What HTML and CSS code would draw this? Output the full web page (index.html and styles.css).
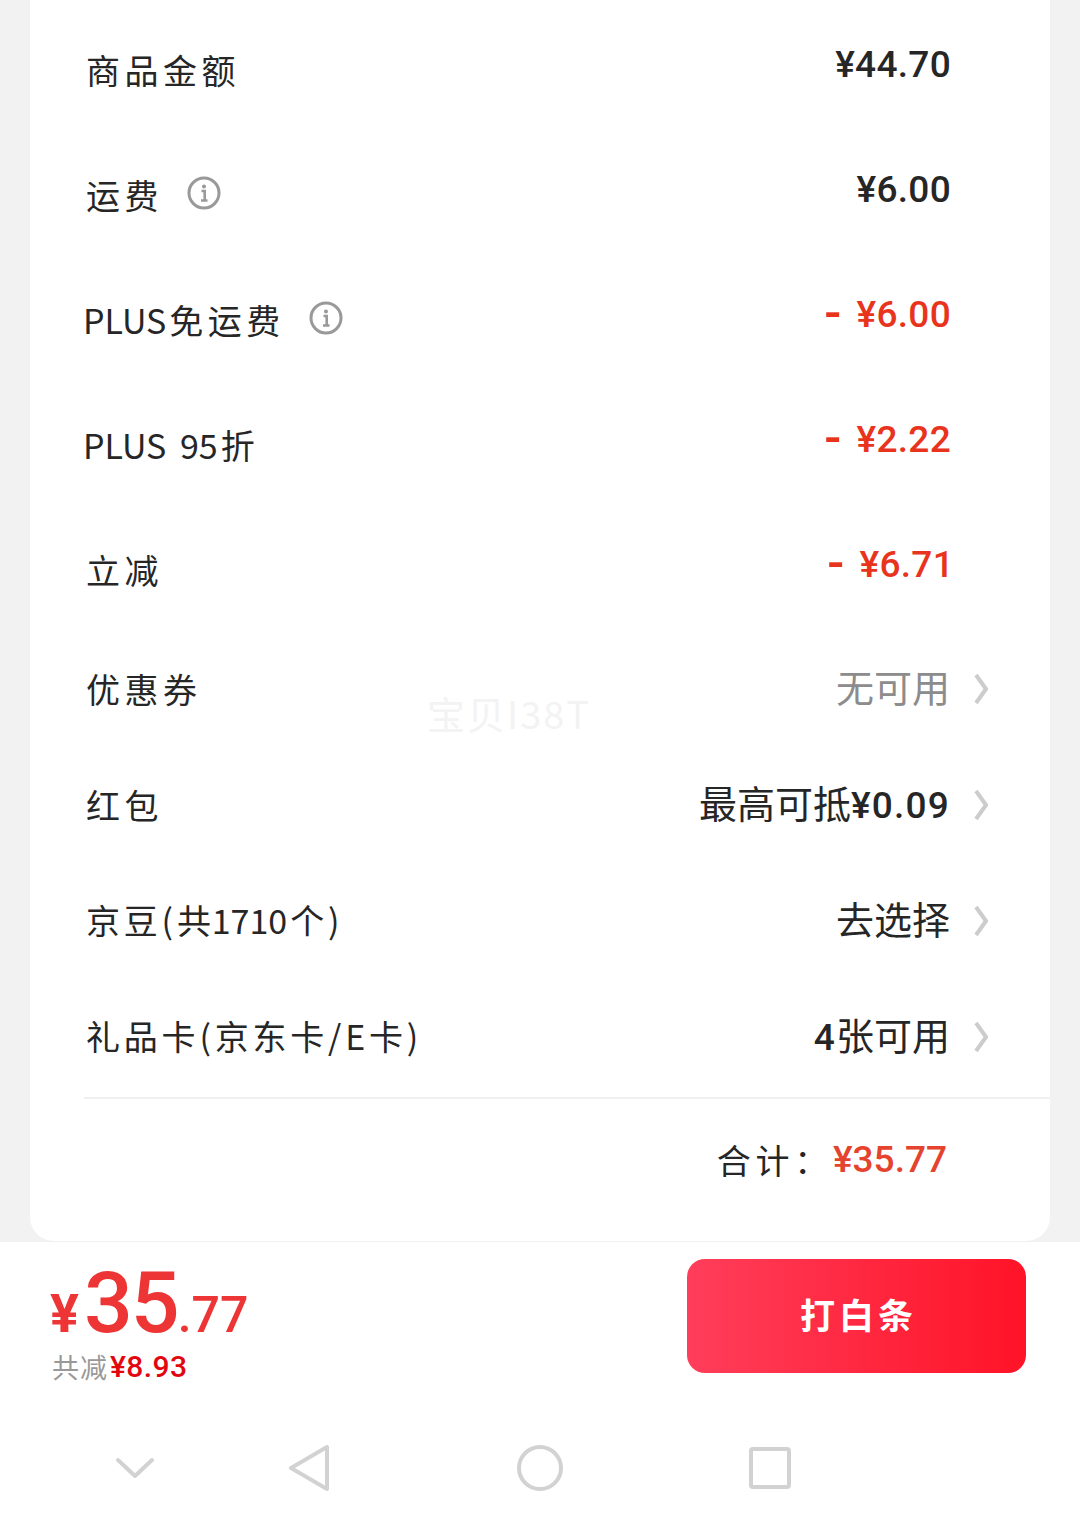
FILE: index.html
```html
<!DOCTYPE html>
<html>
<head>
<meta charset="utf-8">
<title>订单金额</title>
<link rel="stylesheet" href="styles.css">
</head>
<body>
<div class="page">
<section class="card">
    <div class="row row_big">
        <span class="label">商品金额</span>
        <span class="amount">¥44.70</span>
    </div>
    <div class="row row_big">
        <span class="label">运费<svg class="info" viewBox="0 0 34 34"><circle cx="17" cy="17" r="15" fill="none" stroke="#999" stroke-width="3"/><circle cx="17" cy="10.5" r="2" fill="#999"/><path d="M14.5 15h3.2v9M14 24.5h6.5" fill="none" stroke="#999" stroke-width="2.6"/></svg></span>
        <span class="amount">¥6.00</span>
    </div>
    <div class="row row_big">
        <span class="label"><span class="latin">PLUS</span>免运费<svg class="info" viewBox="0 0 34 34"><circle cx="17" cy="17" r="15" fill="none" stroke="#999" stroke-width="3"/><circle cx="17" cy="10.5" r="2" fill="#999"/><path d="M14.5 15h3.2v9M14 24.5h6.5" fill="none" stroke="#999" stroke-width="2.6"/></svg></span>
        <span class="amount red"><i class="minus">-</i>¥6.00</span>
    </div>
    <div class="row row_big">
        <span class="label"><span class="latin">PLUS 95</span>折</span>
        <span class="amount red"><i class="minus">-</i>¥2.22</span>
    </div>
    <div class="row row_big">
        <span class="label">立减</span>
        <span class="amount red amount_one"><i class="minus">-</i>¥6.71</span>
    </div>
    <div class="row row_link">
        <span class="label">优惠券</span>
        <span class="link grey">无可用</span>
        <svg class="arrow" viewBox="0 0 14 32"><path d="M2 2l10 14L2 30" fill="none" stroke="#ccc" stroke-width="4"/></svg>
    </div>
    <div class="row row_link">
        <span class="label">红包</span>
        <span class="link">最高可抵<span class="link_num">¥0.09</span></span>
        <svg class="arrow" viewBox="0 0 14 32"><path d="M2 2l10 14L2 30" fill="none" stroke="#ccc" stroke-width="4"/></svg>
    </div>
    <div class="row row_link">
        <span class="label label_long">京豆(共<span class="latin">1710</span>个)</span>
        <span class="link">去选择</span>
        <svg class="arrow" viewBox="0 0 14 32"><path d="M2 2l10 14L2 30" fill="none" stroke="#ccc" stroke-width="4"/></svg>
    </div>
    <div class="row row_link">
        <span class="label label_long">礼品卡(京东卡/E卡)</span>
        <span class="link"><span class="link_num">4</span>张可用</span>
        <svg class="arrow" viewBox="0 0 14 32"><path d="M2 2l10 14L2 30" fill="none" stroke="#ccc" stroke-width="4"/></svg>
    </div>
    <div class="total">
        <span class="total_label">合计：</span>
        <span class="total_num">¥35.77</span>
    </div>
    <div class="watermark">宝贝I38T</div>
</section>
</div>
<section class="pay">
    <div>
        <div class="price"><span class="price_sign">¥</span><span class="price_int">35</span><span class="price_dec">.77</span></div>
        <div class="save"><span class="save_label">共减</span><span class="save_num">¥8.93</span></div>
    </div>
    <div class="btn">打白条</div>
</section>
<nav class="nav">
    <svg class="nav_down" viewBox="0 0 40 24"><path d="M3 4l17 16L37 4" fill="none" stroke="#d2d2d2" stroke-width="4" stroke-linecap="round" stroke-linejoin="round"/></svg>
    <svg class="nav_back" viewBox="0 0 40 48"><path d="M38 3v42L2 24z" fill="none" stroke="#d2d2d2" stroke-width="4" stroke-linejoin="round"/></svg>
    <svg class="nav_home" viewBox="0 0 46 46"><circle cx="23" cy="23" r="21" fill="none" stroke="#d2d2d2" stroke-width="4"/></svg>
    <svg class="nav_task" viewBox="0 0 42 42"><rect x="2" y="2" width="38" height="38" rx="2" fill="none" stroke="#d2d2d2" stroke-width="4"/></svg>
</nav>
</body>
</html>
```

FILE: styles.css
```css
html, body {
    margin: 0;
    padding: 0;
}
body {
    width: 1080px;
    height: 1529px;
    overflow: hidden;
    background-color: #fff;
    color: #262626;
    font-family: "Roboto", "Noto Sans CJK SC", sans-serif;
}
.page {
    height: 1241px;
    padding: 0 30px;
    background-color: #f2f2f2;
}
.card {
    position: relative;
    box-sizing: border-box;
    height: 1241px;
    padding: 2px 0 0 54px;
    background-color: #fff;
    border-radius: 0 0 24px 24px;
}
.row {
    display: flex;
    align-items: center;
    justify-content: space-between;
}
.row_big {
    height: 125px;
    padding-right: 99px;
}
.row_link {
    height: 116px;
    padding-right: 62px;
}
.label {
    display: flex;
    align-items: center;
    padding: 9px 0 0 2px;
    font-family: "Noto Sans CJK SC", sans-serif;
    font-size: 34px;
    letter-spacing: 4.5px;
}
.row_link .label {
    padding-top: 6px;
}
.row_link .label_long {
    padding-top: 4px;
    letter-spacing: 3.8px;
}
.latin {
    letter-spacing: 0;
    word-spacing: 6px;
}
.label > .latin:first-child {
    margin: 0 3px 0 -3px;
}
.info {
    width: 34px;
    height: 34px;
    margin: 0 0 2px 24px;
}
.amount {
    font-size: 37px;
    font-weight: 500;
    letter-spacing: .3px;
}
.amount_one {
    margin-right: -3px;
}
.red {
    color: #e8341c;
}
.minus {
    margin-right: 15px;
    font-size: 50px;
    font-style: normal;
    font-weight: 500;
    line-height: 0;
    vertical-align: -3px;
}
.link {
    margin-left: auto;
    font-size: 38px;
}
.link_num {
    font-size: 37px;
    font-weight: 500;
    letter-spacing: 1.2px;
}
.grey {
    color: #8c8c8c;
}
.arrow {
    width: 14px;
    height: 32px;
    margin: 8px 0 0 24px;
}
.total {
    display: flex;
    align-items: center;
    justify-content: flex-end;
    height: 120px;
    margin-top: 6px;
    padding-right: 103px;
    border-top: 2px solid #f0f0f0;
}
.total_label {
    font-family: "Noto Sans CJK SC", sans-serif;
    font-size: 34px;
    letter-spacing: 4.7px;
}
.total_num {
    color: #e5432d;
    font-size: 37px;
    font-weight: 500;
}
.watermark {
    position: absolute;
    left: 397px;
    top: 688px;
    color: #f3f3f3;
    font-family: "Noto Sans CJK SC", sans-serif;
    font-size: 38px;
    letter-spacing: 2px;
    line-height: 50px;
}
.pay {
    display: flex;
    justify-content: space-between;
    height: 151px;
    padding: 17px 54px 0 50px;
    border-top: 1px solid #f0f0f0;
}
.price {
    display: flex;
    align-items: baseline;
    height: 88px;
    color: #ee3535;
    font-weight: 500;
    line-height: 88px;
}
.price_sign {
    margin-right: 5px;
    font-size: 54px;
    font-weight: 700;
}
.price_int {
    font-size: 86px;
    letter-spacing: -2px;
}
.price_dec {
    font-size: 50px;
}
.save {
    display: flex;
    align-items: center;
}
.save_label {
    margin-left: 2px;
    color: #999;
    font-family: "Noto Sans CJK SC", sans-serif;
    font-size: 27px;
    letter-spacing: 1px;
}
.save_num {
    margin-left: 2px;
    color: #e2070f;
    font-size: 30px;
    font-weight: 500;
    letter-spacing: .4px;
}
.btn {
    box-sizing: border-box;
    width: 339px;
    height: 114px;
    padding-left: 4px;
    border-radius: 18px;
    background: linear-gradient(90deg, #ff3e5b, #ff1327);
    color: #fff;
    font-family: "Noto Sans CJK SC", sans-serif;
    font-size: 35px;
    font-weight: 700;
    letter-spacing: 4px;
    line-height: 110px;
    text-align: center;
}
.nav {
    display: flex;
    align-items: center;
    height: 116px;
    padding-left: 115px;
}
.nav_down {
    width: 40px;
    height: 24px;
    margin-right: 134px;
}
.nav_back {
    width: 40px;
    height: 48px;
    margin-right: 188px;
}
.nav_home {
    width: 46px;
    height: 46px;
    margin-right: 186px;
}
.nav_task {
    width: 42px;
    height: 42px;
}
```
